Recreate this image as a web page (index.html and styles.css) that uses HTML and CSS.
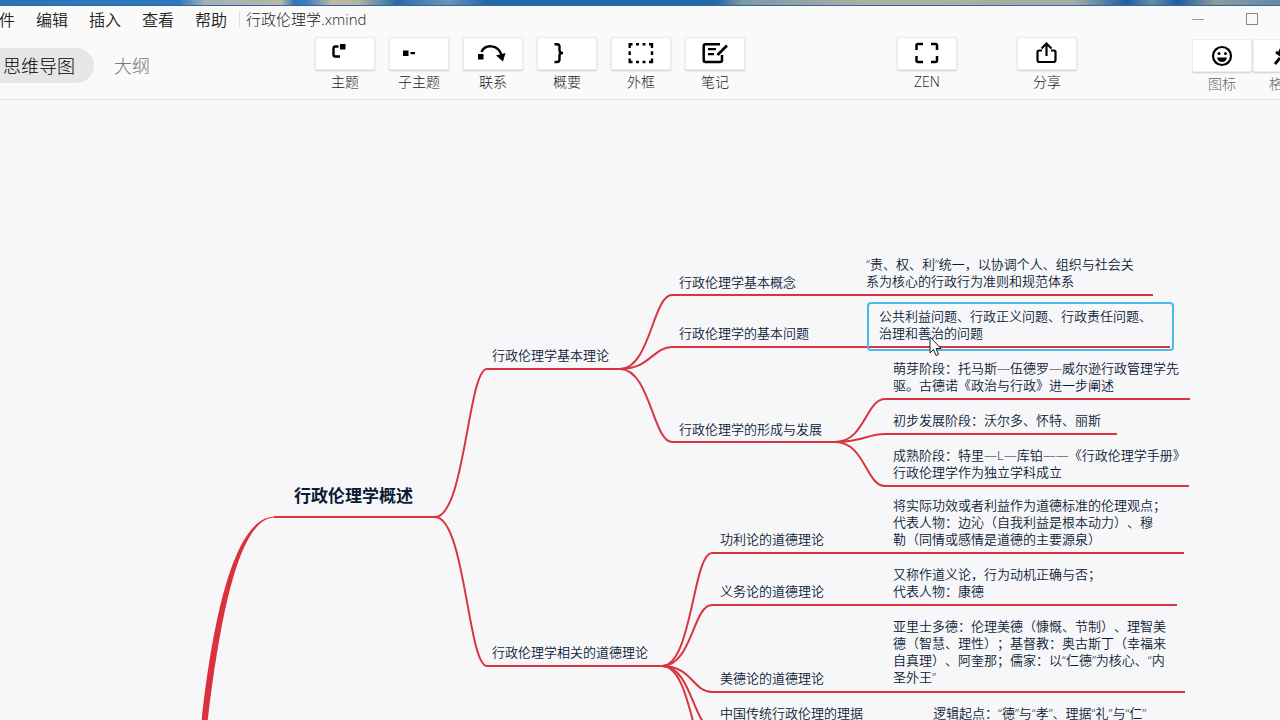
FILE: index.html
```html
<!DOCTYPE html>
<html lang="zh-CN">
<head>
<meta charset="utf-8">
<title>行政伦理学.xmind</title>
<link rel="stylesheet" href="styles.css">
</head>
<body>
<div class="wallpaper"></div>
<header class="header">
  <div class="titlebar">
    <nav class="menu">
      <button>文件</button><button>编辑</button><button>插入</button><button>查看</button><button>帮助</button>
    </nav>
    <h1 class="filename">行政伦理学.xmind</h1>
    <div class="window-controls">
      <button aria-label="最小化"><svg width="14" height="14"><path d="M1 7.500H13" stroke="#999" fill="none"/></svg></button>
      <button aria-label="最大化"><svg width="14" height="14"><rect x="1.500" y="1.500" width="11" height="11" stroke="#888" fill="none"/></svg></button>
    </div>
  </div>
  <div class="toolbar">
    <div class="tabs">
      <button class="tab active">思维导图</button>
      <button class="tab">大纲</button>
    </div>
    <div class="tools main-tools">
      <button class="tool"><span class="face"><svg class="icon" viewBox="1 1 58 31"><path d="M23.500 9.500H20.500Q18.500 9.500 18.500 11.500V17.500Q18.500 19.500 20.500 19.500H25" fill="none" stroke="#000" stroke-width="2.400"/><rect x="25" y="7" width="5.500" height="5.500"/></svg></span>主题</button>
      <button class="tool"><span class="face"><svg class="icon" viewBox="1 1 58 31"><rect x="14" y="13.500" width="5.500" height="5.500"/><rect x="21.500" y="15" width="4.500" height="2.200"/></svg></span>子主题</button>
      <button class="tool"><span class="face"><svg class="icon" viewBox="1 1 58 31"><rect x="15" y="17" width="5.500" height="5.500"/><path d="M18.500 15C22 7 35 7 38.500 18" fill="none" stroke="#000" stroke-width="2.400"/><path d="M33 18.500L42.500 16L40 24.500Z"/></svg></span>联系</button>
      <button class="tool"><span class="face"><svg class="icon" viewBox="1 1 58 31"><path d="M17.500 7.200H20Q22.500 7.200 22.500 9.500V13.500Q22.500 16 26 16Q22.500 16 22.500 18.500V22.500Q22.500 25 20 25H17.500" fill="none" stroke="#000" stroke-width="2.400"/></svg></span>概要</button>
      <button class="tool"><span class="face"><svg class="icon" viewBox="1 1 58 31"><path d="M18.700 11V7.200H21.500M25 7.200H28M31.500 7.200H34.500M38 7.200H41V11M41 14.200V18M41 21.500V25H38M34.500 25H31.500M28 25H25M21.500 25H18.700V21.500M18.700 18V14.200" fill="none" stroke="#000" stroke-width="2.400"/></svg></span>外框</button>
      <button class="tool"><span class="face"><svg class="icon" viewBox="1 1 58 31"><path d="M35 7.200H20.500Q18.700 7.200 18.700 9V23Q18.700 25 20.500 25H35Q37 25 37 23V18" fill="none" stroke="#000" stroke-width="2.500"/><path d="M23 12.200H31M23 17.200H29" stroke="#000" stroke-width="2.200"/><path d="M32.500 18L42 8.500" stroke="#000" stroke-width="2.600"/></svg></span>笔记</button>
    </div>
    <div class="tools end-tools">
      <button class="tool"><span class="face"><svg class="icon" viewBox="1 1 58 31"><path d="M19.500 13V8.500Q19.500 7 21 7H26M34 7H38.500Q40 7 40 8.500V13M40 19V23.500Q40 25 38.500 25H34M26 25H21Q19.500 25 19.500 23.500V19" fill="none" stroke="#000" stroke-width="2.500"/></svg></span>ZEN</button>
      <button class="tool"><span class="face"><svg class="icon" viewBox="1 1 58 31"><path d="M25 13.500H22Q20.500 13.500 20.500 15V23Q20.500 25 22.500 25H36.500Q38.500 25 38.500 23V15Q38.500 13.500 37 13.500H34M29.500 19V7M24.500 11.500L29.500 6.500L34.500 11.500" fill="none" stroke="#000" stroke-width="2.200"/></svg></span>分享</button>
    </div>
    <div class="tools panel-tools">
      <button class="tool"><span class="face"><svg class="icon" viewBox="1 1 58 31"><circle cx="30" cy="17" r="9" fill="none" stroke="#000" stroke-width="2.200"/><circle cx="27" cy="14.500" r="1.500"/><circle cx="33.500" cy="14.500" r="1.500"/><path d="M25 18.500H35Q34 23 30 23Q26 23 25 18.500Z"/></svg></span>图标</button>
      <button class="tool"><span class="face"><svg class="icon" viewBox="1 1 58 31"><path d="M23 13L37 23M27 19L22 25M28 10L25.500 16" fill="none" stroke="#000" stroke-width="2.800"/></svg></span>格式</button>
    </div>
  </div>
</header>
<main class="canvas">
  <svg class="links" viewBox="0 100 1280 620" width="1280" height="620">
    <path class="trunk" d="M201.500 722C215 600 238 516.500 275 516.500V517.500C242 517.500 222 600 207.500 722Z"/>
    <g class="branch">
      <path d="M274 517H435C465 517 468 369 487 369H620"/>
      <path d="M435 517C465 517 468 666 487 666H662"/>
      <path d="M620 369C650 369 653 295 672 295H1153"/>
      <path d="M620 369C650 369 653 347 672 347H1170"/>
      <path d="M620 369C650 369 653 442 672 442H835"/>
      <path d="M835 442C865 442 866 399 885 399H1190"/>
      <path d="M835 442C865 442 866 434 885 434H1117"/>
      <path d="M835 442C865 442 866 486 885 486H1189"/>
      <path d="M662 666C692 666 693 553 712 553H1184"/>
      <path d="M662 666C692 666 693 605 712 605H1177"/>
      <path d="M662 666C692 666 693 692 712 692H1185"/>
      <path d="M662 666C692 666 693 727 712 727H1170"/>
      <path d="M662 666C692 666 693 762 712 762"/>
    </g>
  </svg>
  <div class="node major n1">行政伦理学概述</div>
  <div class="node n2">行政伦理学基本理论</div>
  <div class="node n3">行政伦理学相关的道德理论</div>
  <div class="node n4">行政伦理学基本概念</div>
  <div class="node n5">行政伦理学的基本问题</div>
  <div class="node n6">行政伦理学的形成与发展</div>
  <div class="node n7">“责、权、利”统一，以协调个人、组织与社会关<br>系为核心的行政行为准则和规范体系</div>
  <div class="node selected n8">公共利益问题、行政正义问题、行政责任问题、<br>治理和善治的问题</div>
  <div class="node n9">萌芽阶段：托马斯—伍德罗—威尔逊行政管理学先<br>驱。古德诺《政治与行政》进一步阐述</div>
  <div class="node n10">初步发展阶段：沃尔多、怀特、丽斯</div>
  <div class="node n11">成熟阶段：特里—L—库铂——《行政伦理学手册》<br>行政伦理学作为独立学科成立</div>
  <div class="node n12">功利论的道德理论</div>
  <div class="node n13">义务论的道德理论</div>
  <div class="node n14">美德论的道德理论</div>
  <div class="node n15">中国传统行政伦理的理据</div>
  <div class="node n16">将实际功效或者利益作为道德标准的伦理观点；<br>代表人物：边沁（自我利益是根本动力）、穆<br>勒（同情或感情是道德的主要源泉）</div>
  <div class="node n17">又称作道义论，行为动机正确与否；<br>代表人物：康德</div>
  <div class="node n18">亚里士多德：伦理美德（慷慨、节制）、理智美<br>德（智慧、理性）；基督教：奥古斯丁（幸福来<br>自真理）、阿奎那；儒家：以“仁德”为核心、“内<br>圣外王”</div>
  <div class="node n19">逻辑起点：“德”与“孝”、理据“礼”与“仁”</div>
  <svg class="cursor" width="14" height="21" viewBox="0 0 14 21"><path d="M1 1V17L4.500 13.500L7 19.500L9.500 18.500L7 12.500H12Z" fill="#fff" stroke="#222"/></svg>
</main>
</body>
</html>
```
FILE: styles.css
```css
* { box-sizing: border-box; }
body {
  margin: 0;
  height: 100vh;
  display: flex;
  flex-direction: column;
  overflow: hidden;
  background: #f7f7fa;
  color: #222;
  font-family: "Open Sans", "Noto Sans CJK SC", sans-serif;
  font-weight: 350;
  text-spacing-trim: space-all;
}
button {
  border: 0;
  padding: 0;
  background: none;
  color: inherit;
  font: inherit;
  white-space: nowrap;
}
svg { display: block; }
.wallpaper {
  flex: none;
  height: 6px;
  border-bottom: 1px solid #2a6aa8;
  background: linear-gradient(90deg, #2b74b8 0, #2d78bb 14%, #a5b1b5 16%, #b9b6a4 22%, #3277b8 23%, #3d7fb9 24%, #c0b9a0 26%, #b5b3a2 28%, #2c6ba8 31%, #6c95b8 35%, #2468a8 38%, #2468a8 56%, #8097a5 58%, #b0b1a0 68%, #a5aaa3 84%, #1d5f9f 88%, #6a8ba5 90%, #1d5f9f 92%, #8f9b9b 95%, #6388a6 100%);
}
.header {
  flex: none;
  height: 94px;
  overflow: hidden;
  background: #fafafa;
  border-bottom: 1px solid #e6e6e8;
}
.titlebar { display: flex; align-items: center; height: 26px; }
.menu {
  display: flex;
  gap: 21px;
  margin-left: -17px;
  padding-right: 12px;
  font-size: 16px;
}
.filename {
  margin: 0;
  padding-left: 6px;
  border-left: 1px solid #ddd;
  font-size: 15px;
  font-weight: 300;
  line-height: 16px;
}
.window-controls { display: flex; gap: 40px; margin: 0 21px 0 auto; }
.toolbar { display: flex; align-items: flex-start; padding-top: 2px; }
.tabs {
  display: flex;
  flex: none;
  gap: 20px;
  width: 315px;
  padding-top: 14px;
  font-size: 18px;
  font-weight: 300;
}
.tab { height: 35px; line-height: 36px; color: #777; }
.tab.active {
  padding: 0 19px 0 20px;
  margin-left: -17px;
  border-radius: 18px;
  background: #e6e6e6;
  color: #000;
}
.tools { display: flex; flex: none; padding-top: 3px; }
.tool {
  display: flex;
  flex-direction: column;
  align-items: center;
  gap: 2px;
  width: 60px;
  font-size: 14px;
  font-weight: 300;
  line-height: 20px;
}
.face {
  display: block;
  width: 60px;
  height: 33px;
  border: 1px solid #ececec;
  border-radius: 2px;
  background: #fff;
  box-shadow: 0 1px 2px #ccc;
}
.icon { width: 58px; height: 31px; }
.main-tools { gap: 14px; }
.end-tools { gap: 60px; margin-left: auto; }
.panel-tools {
  gap: 1px;
  width: 88px;
  margin-left: 115px;
  padding-top: 5px;
  color: #666;
  overflow: hidden;
}
.panel-tools .tool { flex: none; }
.canvas { position: relative; flex: 1; overflow: hidden; }
.links { position: absolute; top: 0; left: 0; }
.trunk { fill: #dc303c; }
.branch { fill: none; stroke: #d7353f; stroke-width: 2; }
.node {
  position: absolute;
  color: #0b1a34;
  font-size: 13px;
  line-height: 17px;
  white-space: nowrap;
}
.major { font-size: 17px; font-weight: 700; line-height: 24px; }
.selected {
  width: 307px;
  height: 49px;
  padding: 4px 10px;
  border: 2px solid #4bb8ea;
  border-radius: 4px;
}
.n1 { left: 294px; top: 384px; }
.n2 { left: 492px; top: 247px; }
.n3 { left: 492px; top: 544px; }
.n4 { left: 679px; top: 174px; }
.n5 { left: 679px; top: 225px; }
.n6 { left: 679px; top: 321px; }
.n7 { left: 866px; top: 156px; }
.n8 { left: 867px; top: 202px; }
.n9 { left: 893px; top: 260px; }
.n10 { left: 893px; top: 312px; }
.n11 { left: 893px; top: 347px; }
.n12 { left: 720px; top: 431px; }
.n13 { left: 720px; top: 483px; }
.n14 { left: 720px; top: 570px; }
.n15 { left: 720px; top: 605px; }
.n16 { left: 893px; top: 397px; }
.n17 { left: 893px; top: 466px; }
.n18 { left: 893px; top: 518px; }
.n19 { left: 933px; top: 605px; }
.cursor { position: absolute; left: 929px; top: 236px; }
```
